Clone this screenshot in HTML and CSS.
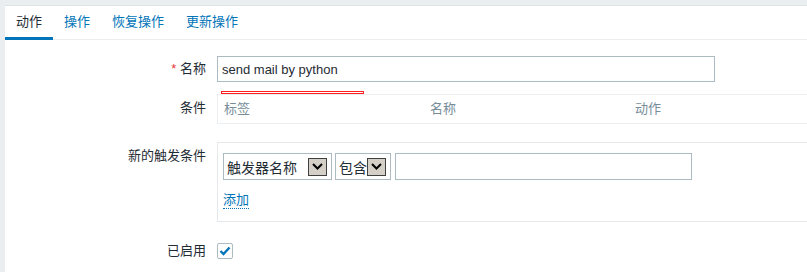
FILE: index.html
```html
<!DOCTYPE html>
<html lang="zh-CN">
<head>
    <meta charset="UTF-8">
    <title>动作</title>
    <link rel="stylesheet" href="styles.css">
</head>
<body>

<div class="panel">
    <ul class="tabs">
        <li class="tab active">动作</li>
        <li class="tab"><a href="#">操作</a></li>
        <li class="tab"><a href="#">恢复操作</a></li>
        <li class="tab"><a href="#">更新操作</a></li>
    </ul>

    <ul class="form-list">
        <li class="form-row">
            <label class="form-label"><span class="required">*</span> 名称</label>
            <div class="form-field">
                <input class="text-input name-input" type="text" value="send mail by python">
                <div class="error-box"><div class="error-inner"></div></div>
            </div>
        </li>

        <li class="form-row">
            <label class="form-label label-table">条件</label>
            <div class="form-field">
                <div class="cond-table">
                    <span>标签</span>
                    <span>名称</span>
                    <span>动作</span>
                </div>
            </div>
        </li>

        <li class="form-row row-new">
            <label class="form-label label-new">新的触发条件</label>
            <div class="form-field">
                <div class="cond-box">
                    <div class="cond-inputs">
                        <div class="select select-type">
                            <span>触发器名称</span>
                            <span class="select-btn">
                                <svg width="11" height="7" viewBox="0 0 11 7"><path d="M1 1 L5.5 5.5 L10 1" fill="none" stroke="#000" stroke-width="2"/></svg>
                            </span>
                        </div>
                        <div class="select select-op">
                            <span>包含</span>
                            <span class="select-btn">
                                <svg width="11" height="7" viewBox="0 0 11 7"><path d="M1 1 L5.5 5.5 L10 1" fill="none" stroke="#000" stroke-width="2"/></svg>
                            </span>
                        </div>
                        <input class="text-input value-input" type="text">
                    </div>
                    <a class="link-add" href="#">添加</a>
                </div>
            </div>
        </li>

        <li class="form-row row-enabled">
            <label class="form-label label-enabled">已启用</label>
            <div class="form-field">
                <span class="checkbox">
                    <svg width="12" height="10" viewBox="0 0 12 10"><path d="M1.5 5 L4.5 8 L10.5 1.5" fill="none" stroke="#0275b8" stroke-width="2.4"/></svg>
                </span>
            </div>
        </li>
    </ul>
</div>

</body>
</html>
```

FILE: styles.css
```css
html, body {
    height: 100%;
}

body {
    margin: 0;
    padding: 5px 0 0 5px;
    box-sizing: border-box;
    background-color: #ebeef0;
    font-family: "Liberation Sans", "Noto Sans CJK SC", sans-serif;
    font-size: 13px;
    color: #1f2c33;
    overflow: hidden;
}

.panel {
    background-color: #ffffff;
    border-top: 1px solid #dfe4e7;
    height: 100%;
    box-sizing: border-box;
    overflow: hidden;
}

.tabs {
    list-style: none;
    margin: 0;
    padding: 0;
    display: flex;
    height: 33px;
    border-bottom: 1px solid #ebeef0;
}

.tab {
    padding: 0 11px;
    line-height: 31px;
    border-bottom: 3px solid transparent;
    margin-bottom: -1px;
}

.tab a {
    color: #0275b8;
    text-decoration: none;
}

.tab.active {
    border-bottom-color: #0275b8;
}

.form-list {
    list-style: none;
    margin: 0;
    padding: 16px 0 0 0;
}

.form-row {
    display: grid;
    grid-template-columns: 201px 1fr;
    column-gap: 11px;
}

.form-label {
    text-align: right;
    line-height: 26px;
}

.required {
    color: #e33734;
}

.text-input {
    box-sizing: border-box;
    border: 1px solid #acbbc2;
    font-family: inherit;
    font-size: 13px;
    color: #1f2c33;
    background-color: #ffffff;
    padding: 0 4px;
    margin: 0;
    outline: none;
}

.name-input {
    display: block;
    width: 498px;
    height: 26px;
}

.error-box {
    width: 143px;
    height: 3px;
    margin: 9px 0 0 4px;
    background-color: #ff2020;
    padding: 1px;
    box-sizing: border-box;
}

.error-inner {
    height: 1px;
    background-color: #ffffff;
}

.label-table {
    line-height: 28px;
}

.cond-table {
    display: grid;
    grid-template-columns: 206px 205px 1fr;
    height: 28px;
    line-height: 28px;
    padding-left: 6px;
    border-top: 1px solid #ebeef0;
    border-bottom: 1px solid #ebeef0;
    border-left: 1px solid #ebeef0;
    color: #768d99;
}

.row-new {
    margin-top: 18px;
}

.label-new {
    line-height: 16px;
    padding-top: 6px;
}

.cond-box {
    border: 1px solid #e5e9ec;
    border-right: none;
    padding: 10px 5px 12px 5px;
}

.cond-inputs {
    display: flex;
    margin-bottom: 12px;
}

.select {
    box-sizing: border-box;
    height: 27px;
    border: 1px solid #acbbc2;
    display: flex;
    align-items: center;
    justify-content: space-between;
    padding: 0 4px 0 3px;
    font-size: 14px;
}

.select-type {
    width: 109px;
    margin-right: 3px;
}

.select-op {
    width: 56px;
    margin-right: 4px;
}

.select-btn {
    box-sizing: border-box;
    width: 19px;
    height: 18px;
    background-color: #d4d0c8;
    border: 1px solid #404040;
    display: flex;
    align-items: center;
    justify-content: center;
}

.value-input {
    width: 297px;
    height: 27px;
}

.link-add {
    display: inline-block;
    color: #0275b8;
    text-decoration: none;
    line-height: 16px;
    border-bottom: 1px dotted #0275b8;
}

.row-enabled {
    margin-top: 21px;
}

.label-enabled {
    line-height: 16px;
}

.checkbox {
    box-sizing: border-box;
    display: flex;
    align-items: center;
    justify-content: center;
    width: 16px;
    height: 16px;
    border: 1px solid #acbbc2;
    border-radius: 2px;
}
```
